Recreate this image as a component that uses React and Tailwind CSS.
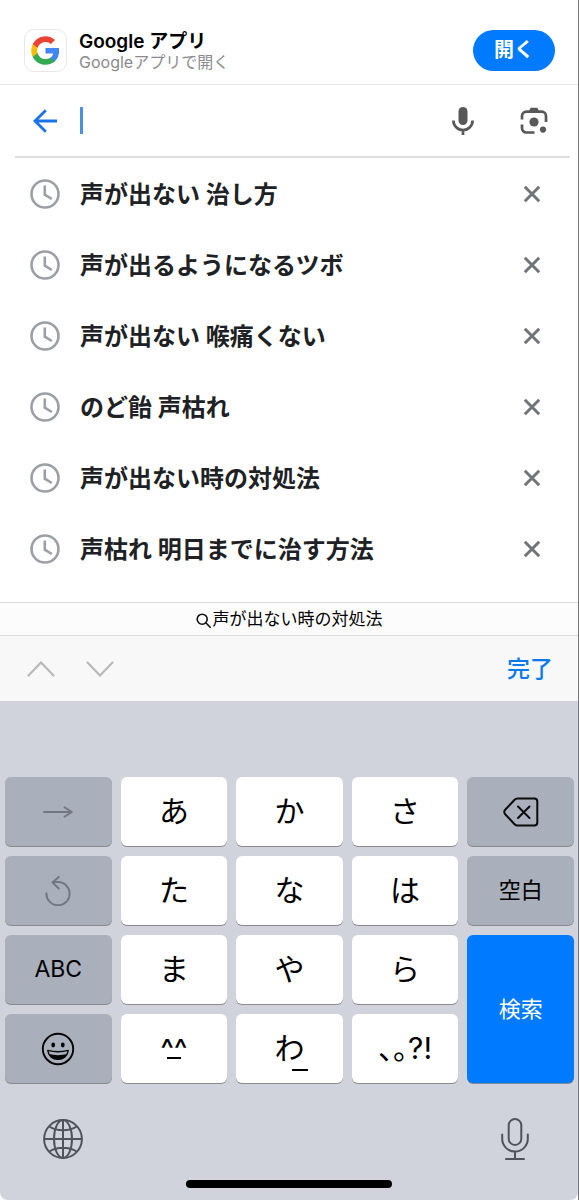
const SUGGESTIONS = [
    '声が出ない 治し方',
    '声が出るようになるツボ',
    '声が出ない 喉痛くない',
    'のど飴 声枯れ',
    '声が出ない時の対処法',
    '声枯れ 明日までに治す方法',
];

const GoogleLogo = () => (
    <svg viewBox="0 0 24 24" className="w-[31px] h-[31px]">
        <path fill="#4285f4" d="M22.56 12.25c0-.78-.07-1.53-.2-2.25H12v4.26h5.92c-.26 1.37-1.04 2.53-2.21 3.31v2.77h3.57c2.08-1.92 3.28-4.74 3.28-8.09z" />
        <path fill="#34a853" d="M12 23c2.97 0 5.46-.98 7.28-2.66l-3.57-2.77c-.98.66-2.23 1.06-3.71 1.06-2.86 0-5.29-1.93-6.16-4.53H2.18v2.84C3.99 20.53 7.7 23 12 23z" />
        <path fill="#fbbc05" d="M5.84 14.09c-.22-.66-.35-1.36-.35-2.09s.13-1.43.35-2.09V7.07H2.18C1.43 8.55 1 10.22 1 12s.43 3.45 1.18 4.93l2.85-2.22.81-.62z" />
        <path fill="#ea4335" d="M12 5.38c1.62 0 3.06.56 4.21 1.64l3.15-3.15C17.45 2.09 14.97 1 12 1 7.7 1 3.99 3.47 2.18 7.07l3.66 2.84c.87-2.6 3.3-4.53 6.16-4.53z" />
    </svg>
);

const ArrowLeftIcon = () => (
    <svg viewBox="0 0 24 24" className="w-6 h-6" fill="none" stroke="#1a73e8" strokeWidth="2.8">
        <path d="M24 12H2.5M12.8 1.2 2 12l10.8 10.8" />
    </svg>
);

const MicFilledIcon = () => (
    <svg viewBox="0 0 22 28" className="w-[22px] h-7">
        <rect x="6.5" y="0" width="9" height="18" rx="4.5" fill="#58585a" />
        <path d="M1.4 13.5a9.6 9.6 0 0 0 19.2 0M11 23v5" fill="none" stroke="#58585a" strokeWidth="2.7" />
    </svg>
);

const LensIcon = () => (
    <svg viewBox="0 0 28 28" className="w-7 h-7" fill="none" stroke="#58585a" strokeWidth="2.7">
        <path d="M2 12.5V9a4.4 4.4 0 0 1 4.4-4.4h15.2A4.4 4.4 0 0 1 26 9v6" />
        <path d="M2 17.5v3.6a4.4 4.4 0 0 0 4.4 4.4H14.5" />
        <path d="m9 4 1.6-3.2h6.8L19 4z" fill="#58585a" stroke="none" />
        <circle cx="14" cy="15" r="4.6" fill="#58585a" stroke="none" />
        <circle cx="23" cy="22.6" r="3.1" fill="#58585a" stroke="none" />
    </svg>
);

const ClockIcon = () => (
    <svg viewBox="0 0 30 30" className="w-[30px] h-[30px] shrink-0" fill="none" stroke="#9aa0a6" strokeWidth="2.6">
        <circle cx="15" cy="15" r="13.5" />
        <path d="M14.8 6.5v9.2l7 4.3" />
    </svg>
);

const CloseIcon = () => (
    <svg viewBox="0 0 18 18" className="w-[18px] h-[18px]" fill="none" stroke="#70757a" strokeWidth="3">
        <path d="m1.8 1.8 14.4 14.4M16.2 1.8 1.8 16.2" />
    </svg>
);

const SearchIcon = () => (
    <svg viewBox="0 0 15 15" className="w-[15px] h-[15px]" fill="none" stroke="#111" strokeWidth="1.6">
        <circle cx="6.2" cy="6.2" r="5" />
        <path d="m9.8 9.8 4.4 4.4" strokeLinecap="round" />
    </svg>
);

const ChevronIcon = ({ down }) => (
    <svg viewBox="0 0 28 16" className="w-7 h-4" fill="none" stroke="#b9b9bb" strokeWidth="2.2" strokeLinecap="round">
        <path d={down ? 'M1.5 1.5 14 14.5 26.5 1.5' : 'M1.5 14.5 14 1.5 26.5 14.5'} />
    </svg>
);

const NextIcon = () => (
    <svg viewBox="0 0 30 12" className="w-[30px] h-3" fill="none" stroke="#737782" strokeWidth="1.9" strokeLinecap="round" strokeLinejoin="round">
        <path d="M1 6h27.5M21.5 1.2 28.8 6l-7.3 4.8" />
    </svg>
);

const UndoIcon = () => (
    <svg viewBox="0 0 26 30" className="w-[26px] h-[30px]" fill="none" stroke="#737782" strokeWidth="2" strokeLinecap="round" strokeLinejoin="round">
        <path d="M1.4 17.3A11.6 11.6 0 1 0 13 6H8" />
        <path d="M13.8 1 7.5 6.6l6.3 5.8" />
    </svg>
);

const DeleteIcon = () => (
    <svg viewBox="0 0 36 30" className="w-9 h-[30px]" fill="none" stroke="#0b0b0d" strokeWidth="2" strokeLinecap="round" strokeLinejoin="round">
        <path d="M14.5 1.5h16.8a3 3 0 0 1 3 3v21a3 3 0 0 1-3 3H14.5a4 4 0 0 1-2.9-1.2L2.2 17.2a3 3 0 0 1 0-4.4l9.4-10.1a4 4 0 0 1 2.9-1.2z" />
        <path d="m15 9.5 11.5 11.5M26.5 9.5 15 21" />
    </svg>
);

const SmileIcon = () => (
    <svg viewBox="0 0 34 34" className="w-[34px] h-[34px]" fill="none" stroke="#060606" strokeWidth="1.9">
        <circle cx="17" cy="17" r="15.2" />
        <ellipse cx="12.2" cy="13" rx="1.9" ry="2.4" fill="#060606" stroke="none" />
        <ellipse cx="21.8" cy="13" rx="1.9" ry="2.4" fill="#060606" stroke="none" />
        <path d="M6.8 18.4c6.6 1.8 13.8 1.8 20.4 0-.5 5.4-4.8 9-10.2 9s-9.7-3.6-10.2-9z" strokeWidth="1.4" strokeLinejoin="round" />
        <path d="M7.6 22c6 1.5 12.8 1.5 18.8 0-1.6 3.4-5 5.4-9.4 5.4S9.2 25.4 7.6 22z" fill="#060606" stroke="none" />
    </svg>
);

const GlobeIcon = () => (
    <svg viewBox="0 0 40 40" className="w-10 h-10" fill="none" stroke="#50535b" strokeWidth="2">
        <circle cx="20" cy="20" r="18.9" />
        <ellipse cx="20" cy="20" rx="9" ry="18.9" />
        <path d="M20 1v38M1 20h38M6.3 7.5c7.5 5 19.9 5 27.4 0M6.3 32.5c7.5-5 19.9-5 27.4 0" />
    </svg>
);

const MicOutlineIcon = () => (
    <svg viewBox="0 0 28 42" className="w-7 h-[42px]" fill="none" stroke="#50535b" strokeWidth="2" strokeLinecap="round">
        <rect x="7.7" y="1" width="12.6" height="26" rx="6.3" />
        <path d="M1.2 16.5v4.3a12.8 12.8 0 0 0 25.6 0v-4.3M14 34v7M5 41h18" />
    </svg>
);

const Key = ({ label, dark, className = '', children }) => (
    <button
        aria-label={label}
        className={`flex items-center justify-center rounded-md shadow-[0_1px_0_#898a8d] ${
            dark ? 'bg-[#a9afbb]' : 'bg-white'
        } text-black ${className}`}
    >
        {children}
    </button>
);

const KanaKey = ({ children }) => (
    <Key className="text-[30px] leading-none pb-[2px]">{children}</Key>
);

const Keyboard = () => (
    <section aria-label="キーボード" className="bg-[#d0d3db] rounded-b-lg pt-[76px] pb-3">
        <div className="grid grid-cols-5 auto-rows-[69px] gap-x-[9px] gap-y-[10px] pl-[5px] pr-1">
            <Key dark label="次の文字"><NextIcon /></Key>
            <KanaKey>あ</KanaKey>
            <KanaKey>か</KanaKey>
            <KanaKey>さ</KanaKey>
            <Key dark label="削除"><DeleteIcon /></Key>

            <Key dark label="戻す"><UndoIcon /></Key>
            <KanaKey>た</KanaKey>
            <KanaKey>な</KanaKey>
            <KanaKey>は</KanaKey>
            <Key dark className="text-[22px]">空白</Key>

            <Key dark className="text-[23px]">ABC</Key>
            <KanaKey>ま</KanaKey>
            <KanaKey>や</KanaKey>
            <KanaKey>ら</KanaKey>
            <button className="row-span-2 flex items-center justify-center rounded-md bg-[#007aff] text-white text-[22px] shadow-[0_1px_0_#7d8797]">
                検索
            </button>

            <Key dark label="絵文字"><SmileIcon /></Key>
            <Key label="^_^" className="text-[28px] leading-none font-medium">
                <span className="relative">
                    ^^
                    <span className="absolute left-1/2 -translate-x-1/2 bottom-1 w-[14px] h-[2px] bg-black" />
                </span>
            </Key>
            <Key label="わ_" className="text-[30px] leading-none pb-[2px]">
                <span className="relative">
                    わ
                    <span className="absolute left-[18px] -bottom-2 w-4 h-[2px] bg-black" />
                </span>
            </Key>
            <Key className="text-[30px] leading-none pb-[2px]">
                <span className="[font-feature-settings:'halt']">、。</span>?!
            </Key>
        </div>

        <div className="flex items-center justify-between pl-[43px] pr-[49px] pt-[35px]">
            <button aria-label="キーボードを切り替える"><GlobeIcon /></button>
            <button aria-label="音声入力"><MicOutlineIcon /></button>
        </div>
        <div className="mx-auto mt-5 h-2 w-[206px] rounded-full bg-black" />
    </section>
);

const App = () => {
    return (
        <main
            lang="ja"
            className="bg-white border-r border-[#77777b] font-['Inter','Noto_Sans_CJK_JP',sans-serif]"
        >
            {/* App banner */}
            <header className="flex items-center pl-6 pr-[23px] pt-4 h-[85px] border-b border-[#e9e9eb]">
                <div className="w-[43px] h-[43px] rounded-[10px] border border-[#e8e8e8] flex items-center justify-center">
                    <GoogleLogo />
                </div>
                <div className="ml-3 pt-1 flex-1">
                    <p className="text-[19px] leading-5 font-semibold text-black">Google アプリ</p>
                    <p className="text-base leading-5 text-[#8a8a8e]">Googleアプリで開く</p>
                </div>
                <button className="w-[82px] h-[41px] rounded-full bg-[#007aff] text-white text-xl font-semibold">
                    開く
                </button>
            </header>

            {/* Search field */}
            <form className="flex items-center ml-[15px] mr-2 pl-[18px] pr-[22px] h-[73px] border-b-2 border-[#dcdde0]">
                <button type="button" aria-label="戻る"><ArrowLeftIcon /></button>
                <span className="ml-[23px] w-[3px] h-[27px] bg-[#4a90e2]" />
                <input
                    type="text"
                    aria-label="検索"
                    className="flex-1 min-w-0 h-12 text-2xl outline-none caret-transparent"
                />
                <button type="button" aria-label="音声検索"><MicFilledIcon /></button>
                <button type="button" aria-label="画像で検索" className="ml-[46px]"><LensIcon /></button>
            </form>

            {/* Search history */}
            <ul className="pb-[18px]">
                {SUGGESTIONS.map((text) => (
                    <li key={text} className="flex items-center h-[71px] pl-[30px] pr-[37px]">
                        <ClockIcon />
                        <a href="#" className="ml-5 pt-[2px] flex-1 text-2xl font-bold text-[#202124]">{text}</a>
                        <button aria-label={`${text} を削除`}><CloseIcon /></button>
                    </li>
                ))}
            </ul>

            <button className="w-full h-[34px] pt-[2px] flex items-center justify-center gap-[2px] border-y border-[#dcdcde] bg-[#fcfcfc] text-[17px] text-black">
                <SearchIcon />
                声が出ない時の対処法
            </button>

            {/* Form accessory bar */}
            <div className="flex items-center h-[65px] pl-[27px] pr-[25px] bg-[#f8f8f8]">
                <button aria-label="前へ"><ChevronIcon /></button>
                <button aria-label="次へ" className="ml-[31px]"><ChevronIcon down /></button>
                <button className="ml-auto pt-[2px] text-[23px] font-medium text-[#087aec]">完了</button>
            </div>

            <Keyboard />
        </main>
    );
};

export default App;
